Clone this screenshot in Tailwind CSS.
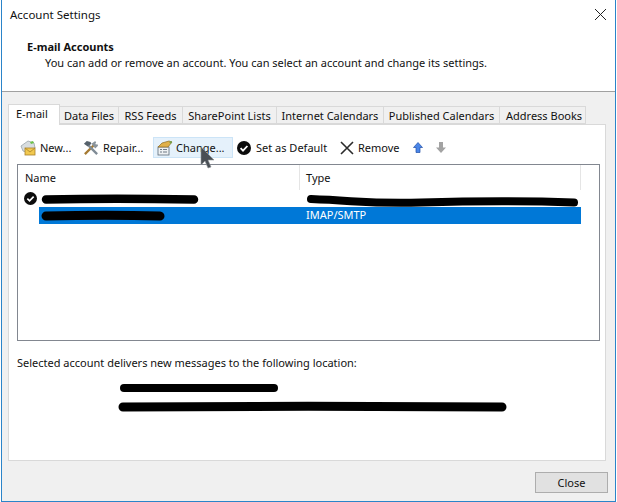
<!doctype html>
<html>
<head>
<meta charset="utf-8">
<title>Account Settings</title>
<script src="https://cdn.jsdelivr.net/npm/@tailwindcss/browser@4"></script>
</head>
<body class="bg-white">
<!-- Account Settings dialog -->
<div class="relative w-[617px] h-[502px] overflow-hidden bg-white font-['Noto_Sans',sans-serif] text-[11px] leading-[16px] text-[#111]">
  <div class="flex flex-col w-[615px] h-[502px] ml-[1px] border-x border-b border-[#2b84c9]">

    <!-- white header -->
    <div class="h-[92px] shrink-0 flex flex-col border-b border-[#a0a0a0] bg-white">
      <div class="flex justify-between pl-[8px] pr-[8px] pt-[7px]">
        <span class="text-[11.5px]">Account Settings</span>
        <svg class="w-[13px] h-[13px] mt-[1px]" viewBox="0 0 13 13" fill="none" stroke="#222" stroke-width="1"><path d="M1 1l11 11M12 1L1 12"/></svg>
      </div>
      <div class="pl-[25px] pt-[16px] font-bold">E-mail Accounts</div>
      <div class="pl-[43px]">You can add or remove an account. You can select an account and change its settings.</div>
    </div>

    <!-- gray body -->
    <div class="flex-1 flex flex-col bg-[#f0f0f0] pl-[6px] pr-[7px] pt-[12px]">
      <!-- tabs -->
      <div class="flex items-end h-[20px] relative z-10">
        <div class="w-[52px] h-[21px] -mb-[1px] bg-white border border-b-0 border-[#d9d9d9] pl-[7px] pt-[1px]">E-mail</div>
        <div class="w-[59px] h-[18px] bg-[#f0f0f0] border-y border-r border-[#d9d9d9] text-center leading-[17px]">Data Files</div>
        <div class="w-[64px] h-[18px] bg-[#f0f0f0] border-y border-r border-[#d9d9d9] text-center leading-[17px]">RSS Feeds</div>
        <div class="w-[94px] h-[18px] bg-[#f0f0f0] border-y border-r border-[#d9d9d9] text-center leading-[17px]">SharePoint Lists</div>
        <div class="w-[107px] h-[18px] bg-[#f0f0f0] border-y border-r border-[#d9d9d9] text-center leading-[17px]">Internet Calendars</div>
        <div class="w-[116px] h-[18px] bg-[#f0f0f0] border-y border-r border-[#d9d9d9] text-center leading-[17px]">Published Calendars</div>
        <div class="w-[86px] h-[18px] bg-[#f0f0f0] border-y border-r border-[#d9d9d9] pl-[6px] leading-[17px]">Address Books</div>
      </div>

      <!-- tab panel -->
      <div class="w-[598px] h-[337px] bg-white border border-[#d9d9d9] flex flex-col pl-[8px]">
        <!-- toolbar -->
        <div class="flex items-center h-[21px] mt-[12px] relative">
          <div class="flex items-center w-[66px] pl-[3px] gap-[3px]">
            <svg class="w-[17px] h-[17px] shrink-0" viewBox="0 0 17 17">
              <path d="M1 7l7-5 6 2 1 5-6 5-6-2z" fill="#d8dde0" stroke="#9aa5ab" stroke-width=".8"/>
              <path d="M10 3l3-1 1 2-3 1z" fill="#6cc24a"/>
              <rect x="5" y="9" width="10" height="7" fill="#f2c94f" stroke="#a9812a" stroke-width=".8"/>
              <path d="M5 9l5 4 5-4" fill="none" stroke="#a9812a" stroke-width=".8"/>
            </svg>
            <span>New...</span>
          </div>
          <div class="flex items-center w-[70px] gap-[4px]">
            <svg class="w-[16px] h-[16px] shrink-0" viewBox="0 0 17 17">
              <path d="M2 15L12 5" stroke="#a57a32" stroke-width="2.400"/>
              <path d="M15 15L6 6" stroke="#7f8b95" stroke-width="2.400"/>
              <path d="M1 4l3-3 4 1 1 2-4 3z" fill="#55616b"/>
              <path d="M9 4l4-3 1 2-1 1 1 1 1-1 1 2-3 3z" fill="#8a949c"/>
            </svg>
            <span>Repair...</span>
          </div>
          <div class="flex items-center w-[80px] h-[21px] pl-[3px] gap-[3px] bg-[#e5f1fb] border border-[#cce4f7]">
            <svg class="w-[16px] h-[16px] shrink-0" viewBox="0 0 16 16">
              <rect x="1" y="7" width="11" height="8" fill="#eef1f3" stroke="#5d6b78" stroke-width=".8"/>
              <path d="M3 9.500h2M6 9.500h4M3 12h2M6 12h4" stroke="#5d6b78" stroke-width=".9"/>
              <path d="M1 7l4-4 7-2 3 1-4 5z" fill="#e0b04a" stroke="#8d6b22" stroke-width=".7"/>
              <path d="M12 2l3-1-1 3z" fill="#6aa84f"/>
            </svg>
            <span>Change...</span>
          </div>
          <div class="flex items-center w-[107px] pl-[4px] gap-[5px]">
            <svg class="w-[14px] h-[14px] shrink-0" viewBox="0 0 14 14">
              <circle cx="7" cy="7" r="7" fill="#0c0c0c"/>
              <path d="M3.600 7.200l2.400 2.400 4.400-4.600" fill="none" stroke="#fff" stroke-width="1.800"/>
            </svg>
            <span>Set as Default</span>
          </div>
          <div class="flex items-center w-[73px] gap-[4px]">
            <svg class="w-[14px] h-[14px] shrink-0" viewBox="0 0 14 14" fill="none" stroke="#2b2b2b" stroke-width="1.600"><path d="M1 1l12 12M13 1L1 13"/></svg>
            <span>Remove</span>
          </div>
          <svg class="w-[10px] h-[11px] shrink-0" viewBox="0 0 10 11"><path d="M5 .5l4.500 5H7V10.500H3V5.500H.5z" fill="#4a86e8" stroke="#1f4fa8" stroke-width=".7"/></svg>
          <svg class="w-[10px] h-[11px] shrink-0 ml-[13px]" viewBox="0 0 10 11"><path d="M3 0h4v5.500h3L5 11 0 5.500h3z" fill="#a3a3a3"/></svg>
        </div>

        <!-- account list -->
        <div class="w-[583px] h-[177px] mt-[6px] border border-[#828790] bg-white flex flex-col">
          <div class="flex h-[25px] shrink-0">
            <div class="w-[282px] h-[25px] pl-[7px] pt-[5px] border-r border-[#e5e5e5]">Name</div>
            <div class="w-[281px] h-[25px] pl-[6px] pt-[5px] border-r border-[#e5e5e5]">Type</div>
          </div>
          <div class="h-[17px] shrink-0 flex items-center pl-[6px]">
            <svg class="w-[13px] h-[13px]" viewBox="0 0 14 14">
              <circle cx="7" cy="7" r="7" fill="#0c0c0c"/>
              <path d="M3.600 7.200l2.400 2.400 4.400-4.600" fill="none" stroke="#fff" stroke-width="1.800"/>
            </svg>
          </div>
          <div class="h-[17px] w-[542px] ml-[21px] shrink-0 bg-[#0078d7] text-white pl-[267px]">IMAP/SMTP</div>
        </div>

        <div class="mt-[14px]">Selected account delivers new messages to the following location:</div>
      </div>

      <!-- footer -->
      <div class="flex justify-end mt-[11px]">
        <div class="w-[73px] h-[21px] bg-[#e1e1e1] border border-[#adadad] text-center leading-[19px]">Close</div>
      </div>
    </div>
  </div>

  <!-- redaction scribbles and mouse cursor, laid over the dialog -->
  <svg class="absolute left-0 top-0 pointer-events-none" width="617" height="502" viewBox="0 0 617 502" fill="none" stroke="#000" stroke-linecap="round">
    <path d="M46 199.500c40-1 100-1 148 0" stroke-width="8.500"/>
    <path d="M311 199c50 2 60 5 110 3.500s100-2 153 0" stroke-width="8"/>
    <path d="M46 216c40-1 80-1 114 0" stroke-width="9"/>
    <path d="M124 388h150" stroke-width="8"/>
    <path d="M123 407c120-1 260-1 379 0" stroke-width="9"/>
  </svg>
  <svg class="absolute left-[200px] top-[146px] pointer-events-none" width="16" height="24" viewBox="0 0 16 24">
    <path d="M1 1v18l4-4 3 7 3-1-3-7h6z" fill="#4a4f55" stroke="#8f9397" stroke-width=".6"/>
  </svg>
</div>
</body>
</html>
